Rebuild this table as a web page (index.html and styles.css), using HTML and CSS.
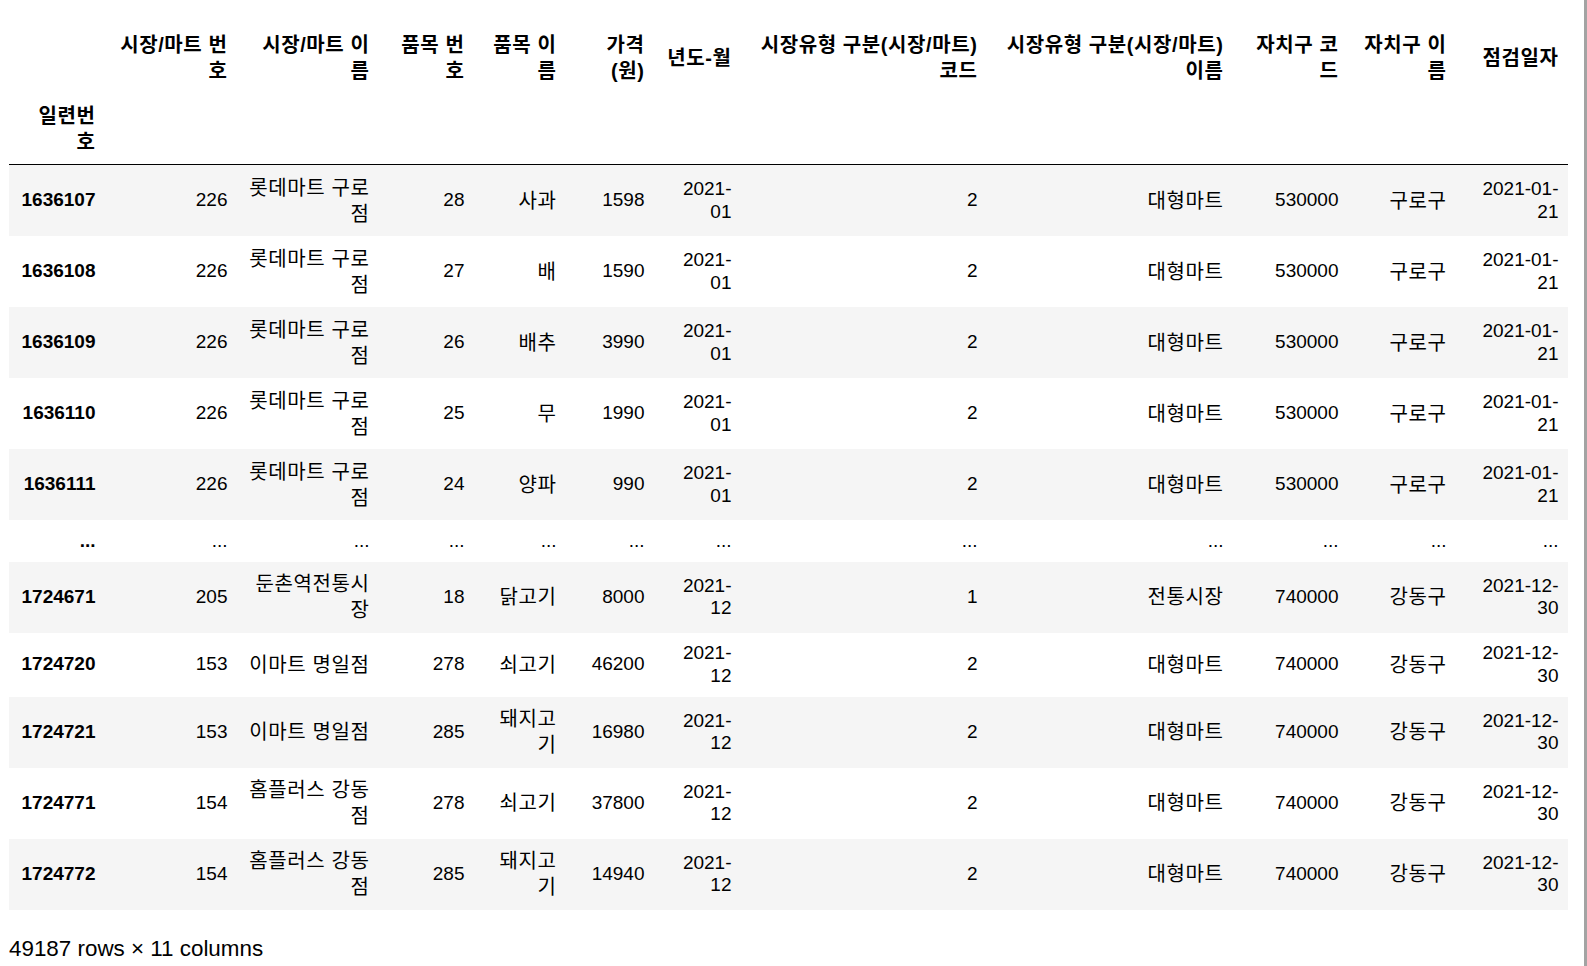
FILE: index.html
```html
<!DOCTYPE html>
<html lang="ko">
<head>
<meta charset="utf-8">
<title>DataFrame</title>
<link rel="stylesheet" href="styles.css">
</head>
<body>
<div class="page">
  <table class="df">
    <colgroup>
      <col class="w-idx"><col class="w-c1"><col class="w-c2"><col class="w-c3"><col class="w-c4"><col class="w-c5"><col class="w-c6"><col class="w-c7"><col class="w-c8"><col class="w-c9"><col class="w-c10"><col class="w-c11">
    </colgroup>
    <thead>
      <tr>
        <th></th>
        <th class="k">시장/마트 번호</th>
        <th class="k">시장/마트 이름</th>
        <th class="k">품목 번호</th>
        <th class="k">품목 이름</th>
        <th class="k">가격(원)</th>
        <th class="k">년도-월</th>
        <th class="k">시장유형 구분(시장/마트) 코드</th>
        <th class="k">시장유형 구분(시장/마트) 이름</th>
        <th class="k">자치구 코드</th>
        <th class="k">자치구 이름</th>
        <th class="k">점검일자</th>
      </tr>
      <tr>
        <th class="k idx">일련번호</th>
        <th></th><th></th><th></th><th></th><th></th><th></th><th></th><th></th><th></th><th></th><th></th>
      </tr>
    </thead>
    <tbody>
      <tr>
        <th class="idx">1636107</th><td>226</td><td class="k">롯데마트 구로점</td><td>28</td><td class="k">사과</td><td>1598</td><td>2021-01</td><td>2</td><td class="k">대형마트</td><td>530000</td><td class="k">구로구</td><td>2021-01-21</td>
      </tr>
      <tr>
        <th class="idx">1636108</th><td>226</td><td class="k">롯데마트 구로점</td><td>27</td><td class="k">배</td><td>1590</td><td>2021-01</td><td>2</td><td class="k">대형마트</td><td>530000</td><td class="k">구로구</td><td>2021-01-21</td>
      </tr>
      <tr>
        <th class="idx">1636109</th><td>226</td><td class="k">롯데마트 구로점</td><td>26</td><td class="k">배추</td><td>3990</td><td>2021-01</td><td>2</td><td class="k">대형마트</td><td>530000</td><td class="k">구로구</td><td>2021-01-21</td>
      </tr>
      <tr>
        <th class="idx">1636110</th><td>226</td><td class="k">롯데마트 구로점</td><td>25</td><td class="k">무</td><td>1990</td><td>2021-01</td><td>2</td><td class="k">대형마트</td><td>530000</td><td class="k">구로구</td><td>2021-01-21</td>
      </tr>
      <tr>
        <th class="idx">1636111</th><td>226</td><td class="k">롯데마트 구로점</td><td>24</td><td class="k">양파</td><td>990</td><td>2021-01</td><td>2</td><td class="k">대형마트</td><td>530000</td><td class="k">구로구</td><td>2021-01-21</td>
      </tr>
      <tr>
        <th class="idx">...</th><td>...</td><td>...</td><td>...</td><td>...</td><td>...</td><td>...</td><td>...</td><td>...</td><td>...</td><td>...</td><td>...</td>
      </tr>
      <tr>
        <th class="idx">1724671</th><td>205</td><td class="k">둔촌역전통시장</td><td>18</td><td class="k">닭고기</td><td>8000</td><td>2021-12</td><td>1</td><td class="k">전통시장</td><td>740000</td><td class="k">강동구</td><td>2021-12-30</td>
      </tr>
      <tr>
        <th class="idx">1724720</th><td>153</td><td class="k">이마트 명일점</td><td>278</td><td class="k">쇠고기</td><td>46200</td><td>2021-12</td><td>2</td><td class="k">대형마트</td><td>740000</td><td class="k">강동구</td><td>2021-12-30</td>
      </tr>
      <tr>
        <th class="idx">1724721</th><td>153</td><td class="k">이마트 명일점</td><td>285</td><td class="k">돼지고기</td><td>16980</td><td>2021-12</td><td>2</td><td class="k">대형마트</td><td>740000</td><td class="k">강동구</td><td>2021-12-30</td>
      </tr>
      <tr>
        <th class="idx">1724771</th><td>154</td><td class="k">홈플러스 강동점</td><td>278</td><td class="k">쇠고기</td><td>37800</td><td>2021-12</td><td>2</td><td class="k">대형마트</td><td>740000</td><td class="k">강동구</td><td>2021-12-30</td>
      </tr>
      <tr>
        <th class="idx">1724772</th><td>154</td><td class="k">홈플러스 강동점</td><td>285</td><td class="k">돼지고기</td><td>14940</td><td>2021-12</td><td>2</td><td class="k">대형마트</td><td>740000</td><td class="k">강동구</td><td>2021-12-30</td>
      </tr>
    </tbody>
  </table>
  <p class="summary">49187 rows × 11 columns</p>
</div>
</body>
</html>
```
FILE: styles.css
```css
html, body {
  margin: 0;
  padding: 0;
  background: #ffffff;
}

body {
  font-family: "Liberation Sans", Arial, "Noto Sans CJK KR", sans-serif;
  color: #000000;
}

.page {
  height: 966px;
  box-sizing: border-box;
  padding: 22px 0 0 9px;
  border-right: 3px solid #a3a3a3;
  overflow: hidden;
}

.df {
  border-collapse: collapse;
  table-layout: fixed;
  width: 1559px;
  font-size: 19px;
}

.df th,
.df td {
  padding: 9.5px;
  text-align: right;
  vertical-align: middle;
  line-height: 22.5px;
  font-weight: normal;
  white-space: normal;
}

.df th {
  font-weight: bold;
}

.df .idx {
  padding-left: 12px;
  padding-right: 7.5px;
}

/* Korean text: slightly larger and wider set, taller lines */
.df .k {
  font-size: 20px;
  letter-spacing: 0.6px;
  line-height: 26px;
}

.df thead {
  border-bottom: 1px solid #000000;
}

.df tbody tr:nth-child(odd) {
  background: #f5f5f5;
}

.w-idx { width: 94px; }
.w-c1 { width: 134px; }
.w-c2 { width: 142px; }
.w-c3 { width: 95px; }
.w-c4 { width: 92px; }
.w-c5 { width: 88px; }
.w-c6 { width: 87px; }
.w-c7 { width: 246px; }
.w-c8 { width: 246px; }
.w-c9 { width: 115px; }
.w-c10 { width: 108px; }
.w-c11 { width: 112px; }

.summary {
  margin: 26px 0 0;
  font-size: 22.4px;
  line-height: 26px;
}
```
